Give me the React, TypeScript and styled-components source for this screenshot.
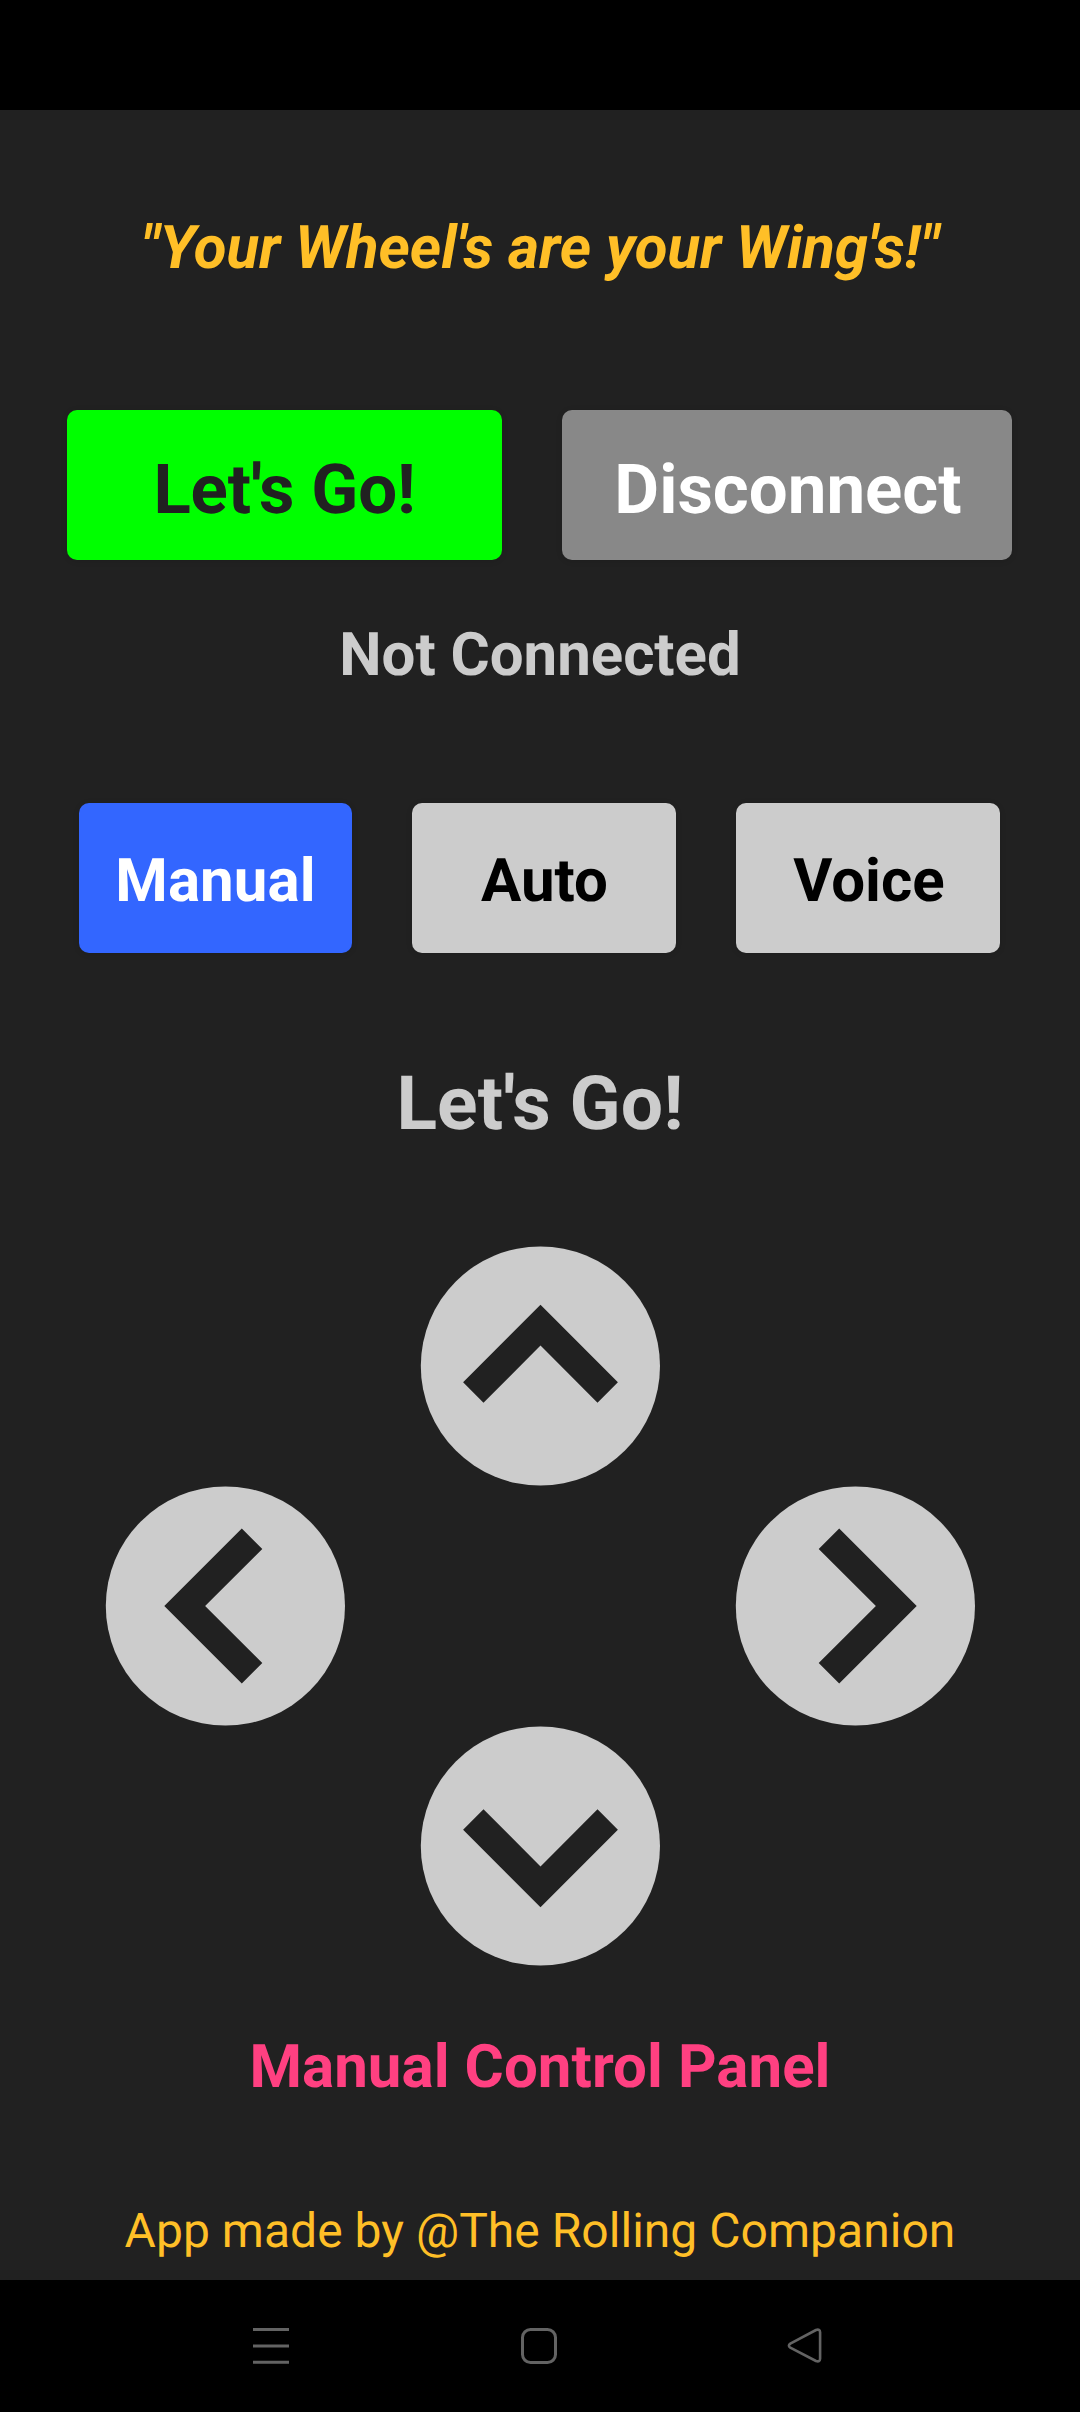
import React from "react";
import styled, { createGlobalStyle } from "styled-components";

const GlobalStyle = createGlobalStyle`
  *, *::before, *::after { box-sizing: border-box; }
  body { margin: 0; background: #000; }
`;

const Screen = styled.div`
  display: flex;
  flex-direction: column;
  width: 1080px;
  height: 2412px;
  background: #000;
  font-family: Roboto, "Liberation Sans", sans-serif;
  text-rendering: geometricPrecision;
  overflow: hidden;
`;

const StatusBar = styled.div`
  flex: none;
  height: 110px;
`;

const Content = styled.main`
  flex: none;
  height: 2170px;
  padding-top: 98px;
  display: flex;
  flex-direction: column;
  align-items: center;
  background: #212121;
`;

const Label = styled.p<{
  $size?: number;
  $line?: number;
  $color?: string;
  $italic?: boolean;
  $weight?: number;
  $track?: number;
}>`
  margin: 0;
  font-size: ${(p) => p.$size ?? 60}px;
  line-height: ${(p) => p.$line ?? 80}px;
  font-weight: ${(p) => p.$weight ?? 700};
  font-style: ${(p) => (p.$italic ? "italic" : "normal")};
  letter-spacing: ${(p) => p.$track ?? 0}px;
  color: ${(p) => p.$color ?? "#cccccc"};
  white-space: nowrap;
`;

const ButtonRow = styled.div<{ $top: number; $left: number }>`
  align-self: flex-start;
  display: flex;
  gap: 60px;
  margin: ${(p) => p.$top}px 0 0 ${(p) => p.$left}px;
`;

const Button = styled.button<{
  $w: number;
  $bg: string;
  $fg: string;
  $size?: number;
  $drop?: number;
  $indent?: number;
  $track?: number;
}>`
  display: flex;
  align-items: center;
  justify-content: center;
  width: ${(p) => p.$w}px;
  height: 150px;
  padding: ${(p) => p.$drop ?? 5}px 0 0 ${(p) => p.$indent ?? 0}px;
  border: 0;
  border-radius: 10px;
  background: ${(p) => p.$bg};
  color: ${(p) => p.$fg};
  font: 700 ${(p) => p.$size ?? 60}px/80px Roboto, "Liberation Sans", sans-serif;
  letter-spacing: ${(p) => p.$track ?? 0}px;
  text-rendering: inherit;
  white-space: nowrap;
  box-shadow: 0 1px 6px rgba(0, 0, 0, 0.12);
`;

const Status = styled.div`
  margin-top: 55px;
`;

const Command = styled.div`
  margin-top: 101px;
`;

const Pad = styled.div`
  display: grid;
  grid-template-columns: repeat(3, 240px);
  grid-template-rows: repeat(3, 240px);
  column-gap: 75px;
  margin-top: 92px;
  grid-template-areas:
    ". up ."
    "left . right"
    ". down .";
`;

const PadButton = styled.button<{ $area: string }>`
  grid-area: ${(p) => p.$area};
  display: block;
  width: 240px;
  height: 240px;
  padding: 0;
  border: 0;
  background: transparent;
`;

const Panel = styled.div`
  margin-top: 61px;
`;

const Credit = styled.div`
  margin-top: 94px;
`;

const NavBar = styled.nav`
  flex: none;
  height: 132px;
  display: grid;
  grid-template-columns: 36px 36px 36px;
  column-gap: 232px;
  align-items: center;
  padding-left: 253px;
`;

const NavIcon = styled.svg`
  display: block;
  width: 36px;
  height: 36px;
  fill: none;
  stroke: #636363;
  stroke-width: 3;
  stroke-linejoin: round;
  overflow: visible;
`;

const directions = [
  { area: "up", turn: 0, label: "Forward" },
  { area: "left", turn: -90, label: "Left" },
  { area: "right", turn: 90, label: "Right" },
  { area: "down", turn: 180, label: "Backward" },
];

function Arrow({ turn }: { turn: number }) {
  return (
    <svg width="240" height="240" viewBox="0 0 240 240">
      <circle cx="120.4" cy="120" r="119.6" fill="#cccccc" />
      <path
        transform={`translate(120.5 120) rotate(${turn})`}
        d="M0 -61.2 L77.4 16.3 L57 36.8 L0 -20.4 L-57 36.8 L-77.4 16.3 Z"
        fill="#212121"
      />
    </svg>
  );
}

export default function App() {
  return (
    <Screen>
      <GlobalStyle />
      <StatusBar />
      <Content>
        <Label as="h1" $italic $color="#ffbf27" $track={-0.04}>
          "Your Wheel's are your Wing's!"
        </Label>

        <ButtonRow $top={122} $left={67}>
          <Button $w={435} $bg="#00ff00" $fg="#212121" $size={69} $drop={10} $track={-0.12}>Let's Go!</Button>
          <Button $w={450} $bg="#888888" $fg="#ffffff" $size={69} $drop={10} $indent={2}>Disconnect</Button>
        </ButtonRow>

        <Status>
          <Label $track={-0.04}>Not Connected</Label>
        </Status>

        <ButtonRow $top={108} $left={79}>
          <Button $w={273} $bg="#3366ff" $fg="#ffffff" $track={0.1}>Manual</Button>
          <Button $w={264} $bg="#cccccc" $fg="#000000" $indent={1}>Auto</Button>
          <Button $w={264} $bg="#cccccc" $fg="#000000" $indent={2}>Voice</Button>
        </ButtonRow>

        <Command>
          <Label $size={75} $line={100} $track={0.1}>Let's Go!</Label>
        </Command>

        <Pad>
          {directions.map((d) => (
            <PadButton key={d.area} $area={d.area} aria-label={d.label}>
              <Arrow turn={d.turn} />
            </PadButton>
          ))}
        </Pad>

        <Panel>
          <Label $color="#ff4081" $track={0.06}>Manual Control Panel</Label>
        </Panel>

        <Credit>
          <Label $size={48} $line={60} $weight={400} $color="#ffbf27" $track={0.03}>
            App made by @The Rolling Companion
          </Label>
        </Credit>
      </Content>

      <NavBar>
        <NavIcon viewBox="0 0 36 36">
          <path d="M0 1.5H36M0 18H36M0 34.3H36" />
        </NavIcon>
        <NavIcon viewBox="0 0 36 36">
          <rect x="1.5" y="1.5" width="33" height="33" rx="8" />
        </NavIcon>
        <NavIcon viewBox="0 0 36 36">
          <path
            strokeWidth="2.6"
            d="M1.6 15.6 L27.3 2 Q31.2 0.6 31.4 4.4 V30.8 Q31.2 34.4 27.3 33 L1.6 19.7 Q-1.2 17.7 1.6 15.6 Z"
            transform="translate(-0.3 0)"
          />
        </NavIcon>
      </NavBar>
    </Screen>
  );
}
